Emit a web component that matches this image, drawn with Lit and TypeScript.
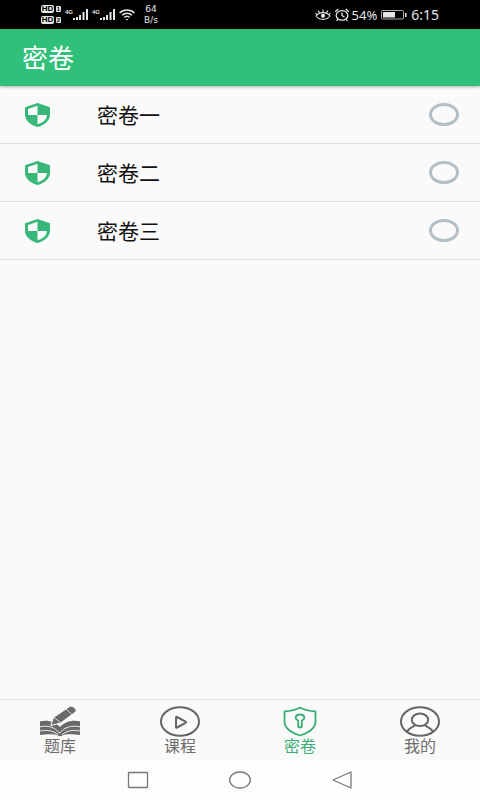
import { LitElement, html, css, svg } from "lit";
import { customElement, state } from "lit/decorators.js";
import { classMap } from "lit/directives/class-map.js";

const sans = css`"Liberation Sans", "Noto Sans CJK SC", sans-serif`;

@customElement("status-bar")
class StatusBar extends LitElement {
  static styles = css`
    :host {
      display: flex;
      justify-content: space-between;
      align-items: center;
      height: 29px;
      padding: 0 41px;
      box-sizing: border-box;
      background: #000;
      color: #e6e6e6;
      font-family: "Noto Sans", sans-serif;
    }
    .group { display: flex; align-items: center; }
    svg { display: block; }
    .sims { display: grid; gap: 3px; margin-right: 4px; }
    .sim { display: flex; align-items: center; gap: 2px; height: 8px; }
    .hd, .slot {
      background: #e6e6e6;
      color: #000;
      border-radius: 2px;
      font: bold 8px/8px "Liberation Sans", sans-serif;
      text-align: center;
    }
    .hd { width: 13px; }
    .slot { width: 5px; height: 6px; font-size: 6px; line-height: 6px; border-radius: 1px; }
    .signal { display: flex; align-items: flex-start; margin-right: 4px; }
    .net { width: 8px; font: bold 6px/6px "Liberation Sans", sans-serif; }
    .speed {
      display: grid;
      justify-items: center;
      gap: 1px;
      width: 16px;
      margin-left: 8px;
      font: 9px/10px "DejaVu Sans", sans-serif;
    }
    .percent { font-size: 13px; line-height: 16px; margin: 0 4px 0 2px; }
    .time { font-size: 14px; line-height: 16px; margin-left: 4px; }
  `;

  private signal() {
    return html`<span class="signal">
      <span class="net">4G</span>
      <svg width="15" height="12" viewBox="0 0 15 12" fill="#e6e6e6">
        <path d="M0 9h2v2H0zM3 8h2v3H3zM6 6h2v5H6zM9.500 3h2v8h-2zM13 0h2v11h-2z" />
      </svg>
    </span>`;
  }

  render() {
    return html`
      <div class="group">
        <div class="sims">
          <div class="sim"><span class="hd">HD</span><span class="slot">1</span></div>
          <div class="sim"><span class="hd">HD</span><span class="slot">2</span></div>
        </div>
        ${this.signal()}${this.signal()}
        <svg width="16" height="12" viewBox="0 0 16 12" fill="none" stroke="#e6e6e6" stroke-width="1.5">
          <path d="M.6 4C4.500 0 11.500 0 15.400 4M3 6.300c2.800-2.700 7.200-2.700 10 0M5.300 8.500c1.600-1.500 3.800-1.500 5.400 0" />
          <path d="M6.500 10h3L8 11.600z" fill="#e6e6e6" stroke="none" />
        </svg>
        <div class="speed"><span>64</span><span>B/s</span></div>
      </div>
      <div class="group">
        <svg width="16" height="12" viewBox="0 0 16 12" fill="none" stroke="#e6e6e6" stroke-width="1.1">
          <path d="M1 7c3.500-4.500 10.500-4.500 14 0-3.500 4.500-10.500 4.500-14 0zM8 3V.5M4.500 3.600 3 1.600M11.500 3.600l1.500-2M1.800 5.500.5 4M14.200 5.500 15.500 4" />
          <circle cx="8" cy="6.800" r="1.500" fill="#e6e6e6" />
        </svg>
        <svg width="19" height="14" viewBox="0 0 19 14" fill="none" stroke="#e6e6e6" stroke-width="1.300">
          <ellipse cx="11" cy="7.400" rx="5.800" ry="4.800" />
          <path d="M11 4.500v3l2.500 1.800M4.200 3.800 7.300 1M17.800 3.800 14.700 1M7 11.500l-1.500 1.300M15 11.500l1.500 1.300" />
        </svg>
        <span class="percent">54%</span>
        <svg width="26" height="10" viewBox="0 0 26 10">
          <rect x=".5" y=".5" width="22" height="8.500" rx="1" fill="none" stroke="#a8a8a8" />
          <rect x="2" y="2" width="12" height="5.500" fill="#e6e6e6" />
          <path d="M24 3h1.500v4H24z" fill="#e6e6e6" />
        </svg>
        <span class="time">6:15</span>
      </div>
    `;
  }
}

@customElement("paper-list")
class PaperList extends LitElement {
  static styles = css`
    :host { display: block; font-family: ${sans}; }
    .row {
      display: flex;
      align-items: center;
      height: 57px;
      padding: 0 21px 0 25px;
      border-bottom: 1px solid #dcdcdc;
      color: #111;
      font-size: 21px;
      line-height: 28px;
      cursor: pointer;
    }
    .shield { flex: none; margin-right: 47px; }
    .name { flex: 1; padding-top: 2px; }
    .pick {
      appearance: none;
      width: 30px;
      height: 23px;
      margin: 0;
      box-sizing: border-box;
      border: 3px solid #b4bfc5;
      border-radius: 50%;
    }
    .pick:checked { border-color: #33bf7a; }
  `;

  render() {
    return html`${["密卷一", "密卷二", "密卷三"].map(
      (name) => html`<label class="row">
        <svg class="shield" width="25" height="24" viewBox="0 0 25 24" aria-hidden="true">
          <path d="M12.500 0 25 4.200v7.300C25 17.500 19.800 22 12.500 24 5.200 22 0 17.500 0 11.500V4.200z" fill="#38b878" />
          <path d="M12.500 2.800V12H3V5.900zM12.500 12H22c-.4 4.500-3.700 7.700-9.500 9.300z" fill="#fafafa" />
        </svg>
        <span class="name">${name}</span>
        <input class="pick" type="radio" name="paper" />
      </label>`
    )}`;
  }
}

const tabs = [
  {
    name: "题库",
    icon: svg`
      <path d="M0 15.200c8-1.500 15 .2 20 5.800 5-5.600 12-7.300 20-5.800V29c-8-1-14-1-17.500.3-1 1.200-4 1.200-5 0C14 28 8 28 0 29z" fill="#6a6a6a"/>
      <path d="M0 20.800c8-1.700 14.500 0 19.500 6.500 5-6.500 12.500-8.200 20.500-6.500M0 25c7-1.400 13-.4 18 3.600M40 25c-7-1.400-13-.4-18 3.600" fill="none" stroke="#fafafa" stroke-width=".9"/>
      <path d="M10.800 19.500l2.700-8L29.500.6c2.500-1.300 7.200 1.600 6.600 5L20.500 17z" fill="#6a6a6a" stroke="#fafafa" stroke-width="1"/>
      <path d="M26 3l6 5.600M14.200 11.500l6 5" fill="none" stroke="#fafafa" stroke-width=".8"/>`,
  },
  {
    name: "课程",
    icon: svg`<g fill="none" stroke="#666" stroke-width="2">
      <ellipse cx="20" cy="15.500" rx="19" ry="14.300"/>
      <path d="M16 11.500v9.500q0 1 1 .5l8.500-4.500q1-.7 0-1.400L17 11q-1-.5-1 .5z"/></g>`,
  },
  {
    name: "密卷",
    icon: svg`<g fill="none" stroke="#38ad74" stroke-width="1.800" stroke-linejoin="round">
      <path d="M20 1.500c3.500 2 8.500 3.500 15.500 4v10C35.500 22 29.500 26.500 20 29.500 10.500 26.500 4.500 22 4.500 15.500v-10c7-.5 12-2 15.500-4z"/>
      <path d="M18.200 14.500c-4.300-2-2.700-6 1.800-6s6.100 4 1.800 6v6.300q-1.800 1.400-3.600 0z"/></g>`,
  },
  {
    name: "我的",
    icon: svg`<g fill="none" stroke="#666" stroke-width="2">
      <ellipse cx="20" cy="15.500" rx="19" ry="14.300"/>
      <ellipse cx="20" cy="13.800" rx="8.200" ry="6.300"/>
      <path d="M6.800 25.500C9.500 21.800 13 20.500 15.500 19.200M33.200 25.500c-2.700-3.700-6.200-5-8.700-6.300"/></g>`,
  },
];

@customElement("tab-bar")
class TabBar extends LitElement {
  @state() private current = "密卷";

  static styles = css`
    :host {
      display: grid;
      grid-template-columns: repeat(4, 1fr);
      height: 60px;
      border-top: 1px solid #e6e6e6;
      background: #fafafa;
    }
    .tab {
      display: flex;
      flex-direction: column;
      align-items: center;
      padding: 6px 0 0;
      border: 0;
      background: none;
      color: #6c6c6c;
      font-family: ${sans};
      font-size: 16px;
      line-height: 20px;
      cursor: pointer;
    }
    .active { color: #38ad74; }
    svg { display: block; flex: none; }
  `;

  render() {
    return html`${tabs.map(
      (tab) => html`<button
        class=${classMap({ tab: true, active: tab.name === this.current })}
        @click=${() => (this.current = tab.name)}
      >
        <svg width="40" height="31" viewBox="0 0 40 31" aria-hidden="true">${tab.icon}</svg>
        ${tab.name}
      </button>`
    )}`;
  }
}

@customElement("system-keys")
class SystemKeys extends LitElement {
  static styles = css`
    :host {
      display: flex;
      justify-content: center;
      align-items: center;
      gap: 62px;
      height: 40px;
      background: #fdfdfd;
    }
    .key {
      display: grid;
      place-items: center;
      width: 40px;
      height: 40px;
      padding: 0;
      border: 0;
      background: none;
    }
    svg { fill: none; stroke: #777; stroke-width: 1.3; stroke-linejoin: round; }
  `;

  render() {
    return html`
      <button class="key" aria-label="Recent apps">
        <svg width="22" height="18" viewBox="0 0 22 18"><rect x="1.500" y="1.500" width="19" height="15" rx=".5" /></svg>
      </button>
      <button class="key" aria-label="Home">
        <svg width="22" height="18" viewBox="0 0 22 18"><ellipse cx="11" cy="9" rx="10.300" ry="8" /></svg>
      </button>
      <button class="key" aria-label="Back">
        <svg width="22" height="18" viewBox="0 0 22 18"><path d="M20 1v16L2 9z" /></svg>
      </button>
    `;
  }
}

@customElement("app-root")
class AppRoot extends LitElement {
  static styles = css`
    :host {
      display: flex;
      flex-direction: column;
      min-height: 100vh;
      background: #fafafa;
      font-family: ${sans};
    }
    .header {
      display: flex;
      align-items: center;
      height: 57px;
      padding: 0 22px;
      background: #30c07a;
      box-shadow: 0 1px 3px rgba(0, 0, 0, 0.3);
    }
    .title {
      margin: 0;
      padding-top: 2px;
      color: #fff;
      font-size: 26px;
      font-weight: 400;
      line-height: 32px;
    }
    .content { flex: 1; }
  `;

  render() {
    return html`
      <status-bar></status-bar>
      <header class="header"><h1 class="title">密卷</h1></header>
      <main class="content"><paper-list></paper-list></main>
      <tab-bar></tab-bar>
      <system-keys></system-keys>
    `;
  }
}
